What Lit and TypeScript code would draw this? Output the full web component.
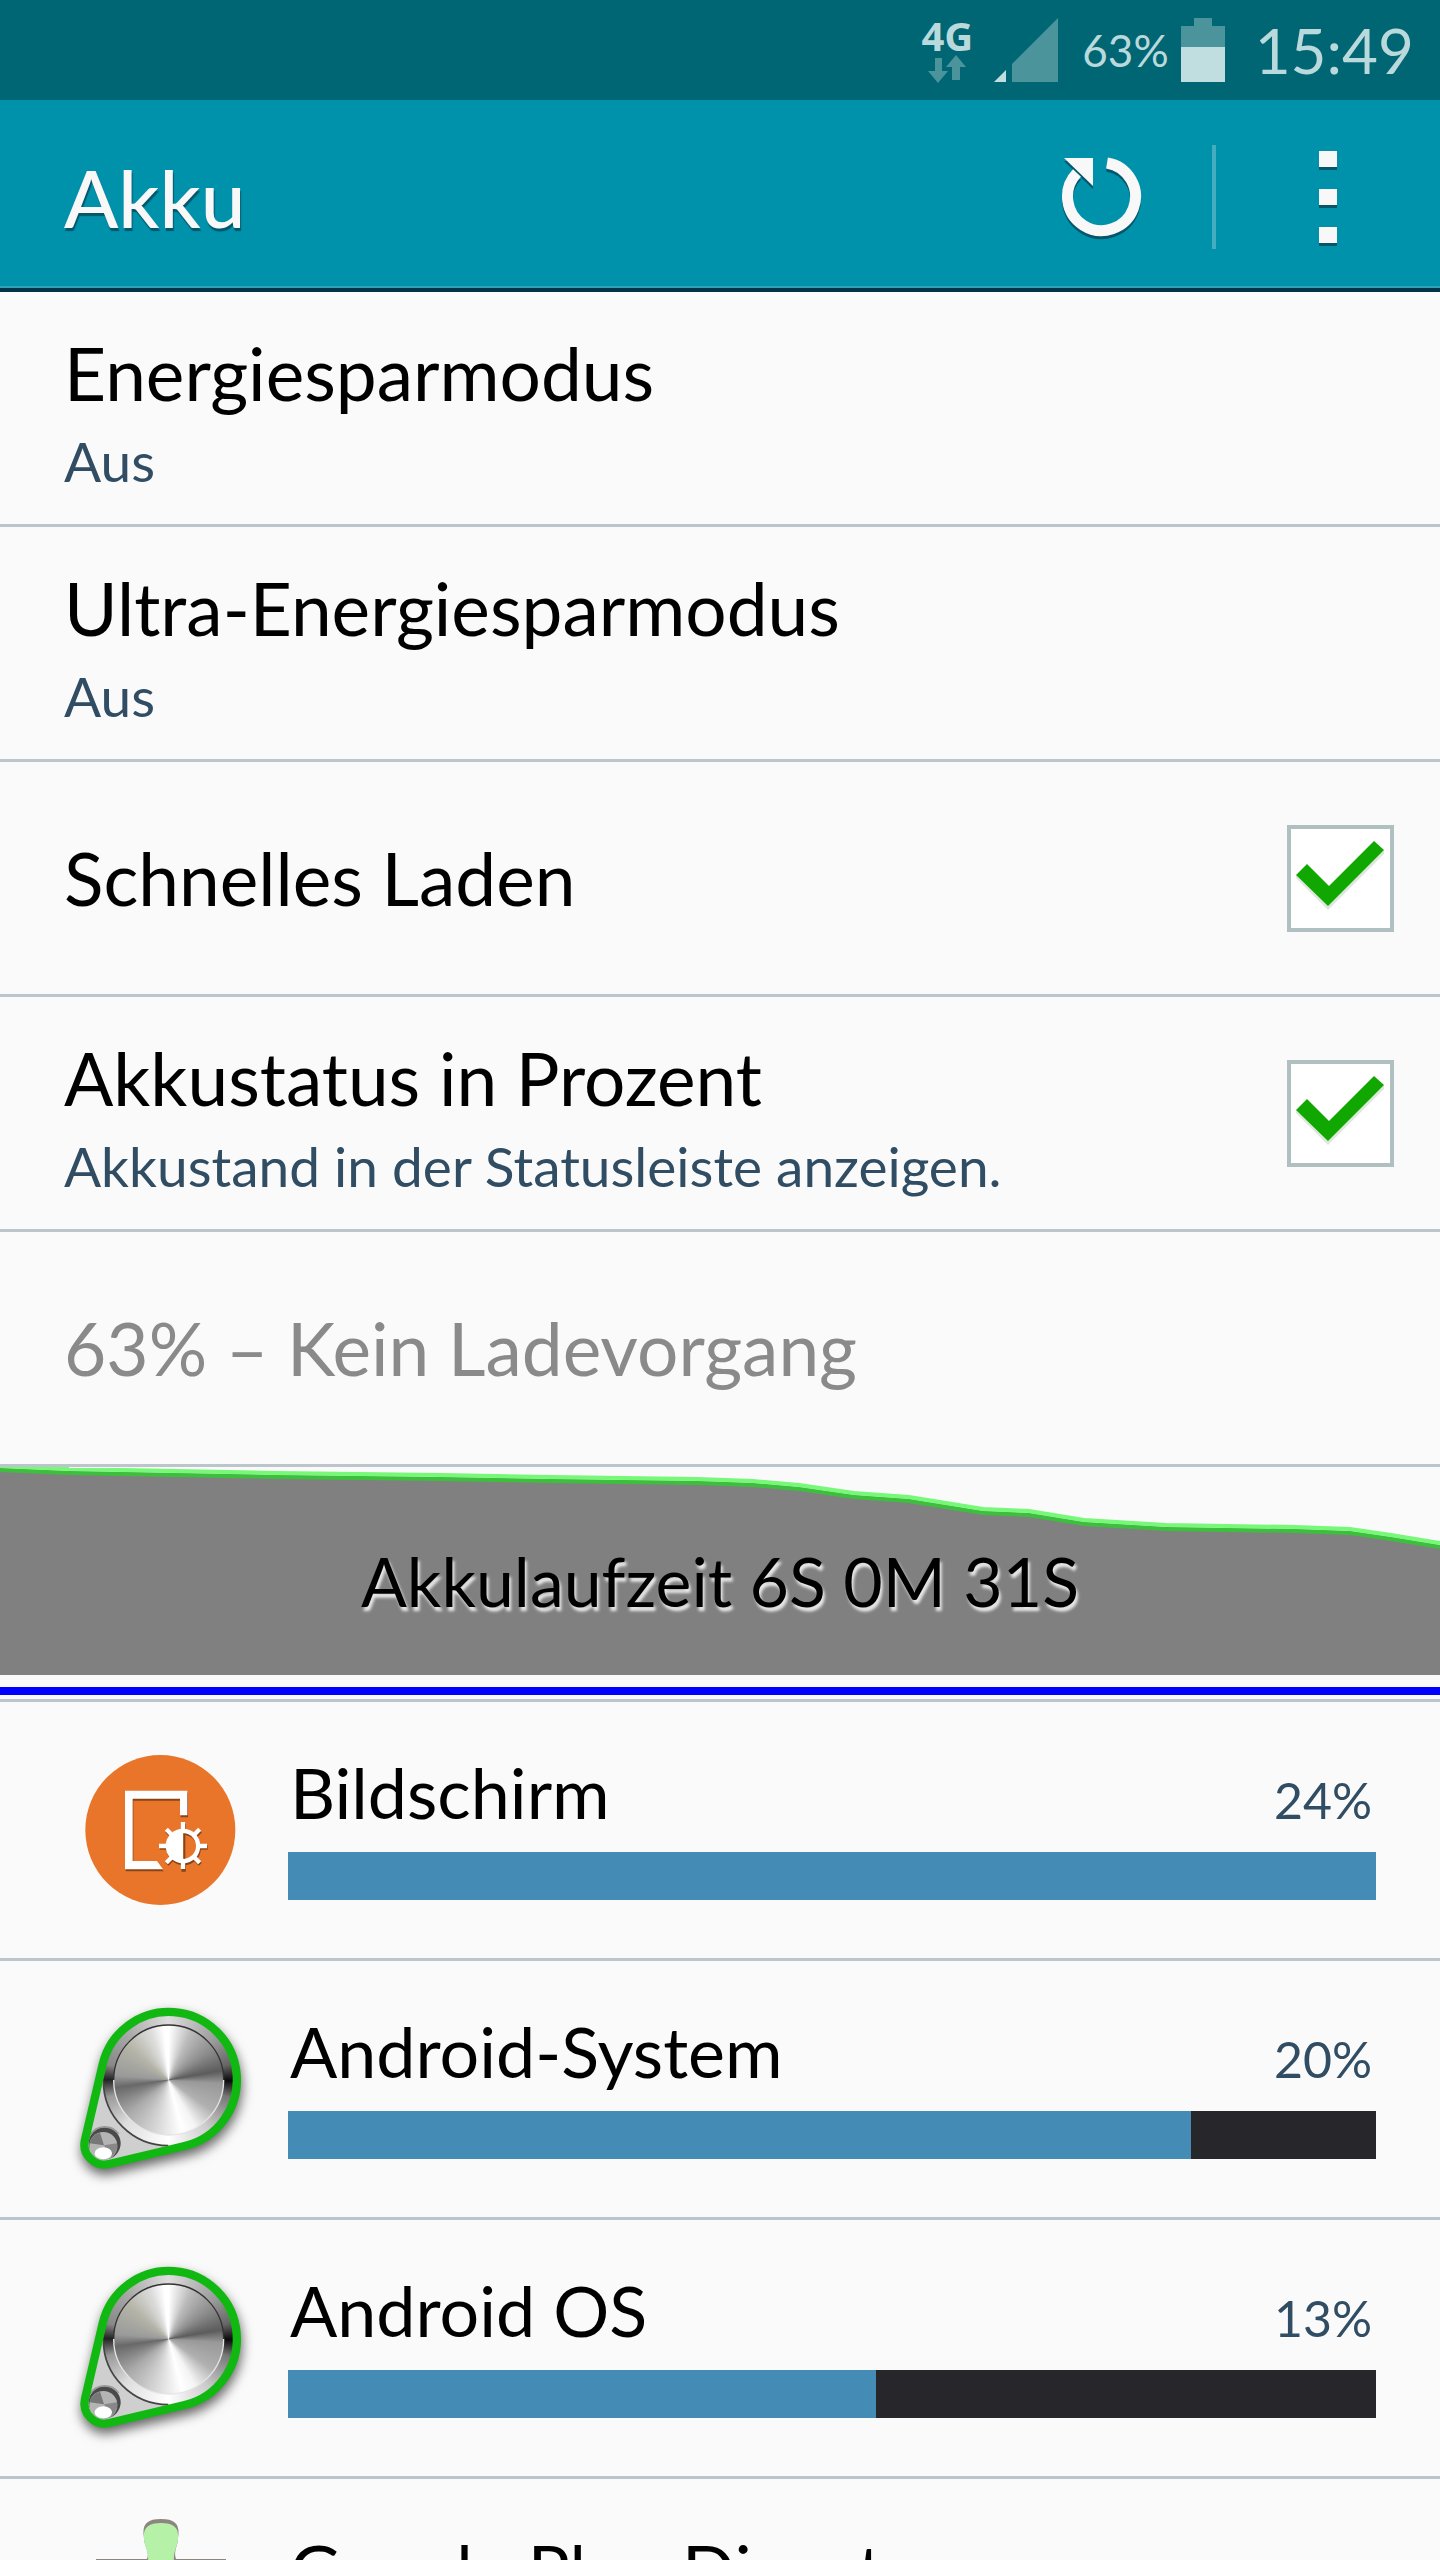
import { LitElement, html, css, svg, nothing } from "lit";
import { customElement, property } from "lit/decorators.js";

const screenIcon = svg`
  <svg class="icon" viewBox="36 66 528 528" aria-hidden="true">
    <circle cx="301" cy="330" r="225" fill="#e87529" />
    <g fill="#8a4316" transform="translate(2 6)">
      <path d="M195 212H382V286H360V236H218V423H291L309 448H195Z" />
      <circle cx="369" cy="378" r="52" />
    </g>
    <path d="M195 212H382V286H360V236H218V423H291L309 448H195Z" fill="#fff" />
    <g stroke="#8a4316" stroke-width="13" transform="translate(2 5)">
      <path d="M369 306V450M297 378H441M319 328L419 428M419 328L319 428" />
    </g>
    <g stroke="#fff" stroke-width="13">
      <path d="M369 306V330M369 426V447M297 378H322M416 378H441M319 328L336 345M419 328L402 345M319 428L336 411M419 428L402 411" />
    </g>
    <circle cx="369" cy="378" r="52" fill="#fff" />
    <path d="M370 340A38 38 0 0 1 370 416Z" fill="#e87529" />
    <path d="M370 340A38 38 0 0 1 407 372A40 36 0 0 0 376 345V416H370Z" fill="#8a4316" />
  </svg>
`;

const knobIcon = svg`
  <svg class="icon knob" viewBox="36 63 528 528" aria-hidden="true">
    <path d="M128 253A204 204 0 1 1 374 498L147 552A60 60 0 0 1 75 480Z" fill="#cfcfcf" />
    <foreignObject x="129" y="106" width="392" height="392"><div class="disc bezel"></div></foreignObject>
    <path d="M130 302A195 195 0 0 0 325 497" fill="none" stroke="#444" stroke-width="5" />
    <foreignObject x="161" y="135" width="330" height="330"><div class="disc face"></div></foreignObject>
    <path d="M161 300A165 165 0 0 1 491 300" fill="none" stroke="#333" stroke-width="4" />
    <path d="M161 300A165 165 0 0 0 491 300" fill="none" stroke="#e4e4e4" stroke-width="4" />
    <circle cx="134" cy="490" r="48" fill="#4a4a4a" />
    <path d="M90 465A52 52 0 0 1 176 462" fill="none" stroke="#999" stroke-width="5" />
    <circle cx="130" cy="498" r="42" fill="#b4b4b4" />
    <path d="M89 490A42 42 0 0 1 120 458L132 496Z" fill="#777" />
    <path d="M171 490L132 496L152 532A42 42 0 0 0 171 490Z" fill="#888" />
    <ellipse cx="130" cy="520" rx="26" ry="18" fill="#fff" />
    <path d="M128 253A204 204 0 1 1 374 498L147 552A60 60 0 0 1 75 480Z" fill="none" stroke="#12b812" stroke-width="25" />
  </svg>
`;

const puzzleIcon = svg`
  <svg class="icon" viewBox="0 0 176 176" aria-hidden="true">
    <path d="M72 19C70 7 73 0 89 0S108 7 106 19C106 27 101 32 104 40H154V136H24V40H75C78 32 72 27 72 19Z" fill="#8d857f" />
    <path d="M72 19C71 9 76 4 89 4S107 9 106 19C106 27 101 32 102 43H150V132H28V43H76C77 32 72 27 72 19Z" fill="#b5f2a8" />
  </svg>
`;

const icons = { screen: screenIcon, knob: knobIcon, puzzle: puzzleIcon };

@customElement("status-bar")
class StatusBar extends LitElement {
  static styles = css`
    :host {
      display: flex;
      align-items: center;
      justify-content: flex-end;
      height: 100px;
      padding: 0 26px;
      background: #006673;
      color: #b9d9dc;
    }
    .network {
      display: flex;
      flex-direction: column;
      align-items: center;
      width: 54px;
      margin-right: 20px;
      font: bold 40px/38px "Open Sans", sans-serif;
    }
    .network svg { display: block; }
    .signal { margin-right: 24px; }
    .level { font-size: 44px; margin-right: 12px; }
    .battery { margin-right: 30px; }
    .clock { font-size: 62px; }
  `;

  render() {
    return html`
      <span class="network">4G
        <svg width="38" height="28" viewBox="0 0 38 28" fill="#4b949c" aria-hidden="true">
          <path d="M7 3H14V16H20L10 28L0 16H7ZM28 0L38 12H32V25H24V12H18Z" />
        </svg>
      </span>
      <svg class="signal" width="64" height="64" viewBox="0 0 64 64" aria-hidden="true">
        <path d="M0 64L12 52V64Z" fill="#c0dde0" />
        <path d="M18 46L64 0V64H18Z" fill="#4b949c" />
      </svg>
      <span class="level">63%</span>
      <svg class="battery" width="44" height="64" viewBox="0 0 44 64" aria-hidden="true">
        <path d="M13 0H31V8H44V29H0V8H13Z" fill="#4b949c" />
        <path d="M0 29H44V64H0Z" fill="#c0dde0" />
      </svg>
      <span class="clock">15:49</span>
    `;
  }
}

@customElement("action-bar")
class ActionBar extends LitElement {
  static styles = css`
    :host {
      display: flex;
      align-items: center;
      height: 182px;
      padding: 6px 64px 0;
      background: #0091ab;
      border-bottom: 4px solid #00334a;
      box-shadow: inset 0 -2px #2ea3b8;
      color: #f8f8f8;
    }
    h1 {
      flex: 1;
      margin: 0;
      font-size: 80px;
      font-weight: 500;
      line-height: 96px;
      text-shadow: 1px 3px 1px #04566a;
    }
    button {
      display: flex;
      align-items: center;
      justify-content: center;
      padding: 0;
      border: 0;
      background: none;
    }
    .refresh { width: 96px; height: 104px; margin-right: 64px; }
    .separator { width: 4px; height: 104px; background: #45adbf; }
    .menu { width: 96px; height: 104px; margin-left: 64px; }
    svg { filter: drop-shadow(0 3px 0 #04566a); }
  `;

  render() {
    return html`
      <h1>Akku</h1>
      <button class="refresh" aria-label="Aktualisieren">
        <svg width="84" height="80" viewBox="0 0 84 80" aria-hidden="true">
          <path d="M49 6A34 34 0 1 1 19 16" fill="none" stroke="#f8f8f8" stroke-width="11" />
          <path d="M6 1H35V29Z" fill="#f8f8f8" />
        </svg>
      </button>
      <span class="separator"></span>
      <button class="menu" aria-label="Weitere Optionen">
        <svg width="18" height="92" viewBox="0 0 18 92" fill="#f8f8f8" aria-hidden="true">
          <path d="M0 0H18V16H0ZM0 38H18V54H0ZM0 76H18V92H0Z" />
        </svg>
      </button>
    `;
  }
}

@customElement("setting-row")
class SettingRow extends LitElement {
  @property() label = "";
  @property() note = "";
  @property({ type: Boolean }) toggle = false;
  @property({ type: Boolean }) muted = false;

  static styles = css`
    :host {
      display: block;
      border-bottom: 3px solid #bcc5cb;
    }
    .row {
      display: flex;
      align-items: center;
      min-height: 232px;
      padding: 0 46px 0 64px;
      box-sizing: border-box;
    }
    .text { flex: 1; display: flex; flex-direction: column; }
    .double { padding-top: 14px; }
    .title { font-size: 73px; line-height: 92px; color: #000; }
    .muted { color: #8a8a8a; }
    .note { font-size: 55px; line-height: 84px; color: #304d63; }
    .box { display: grid; }
    .box > * { grid-area: 1 / 1; }
    input {
      appearance: none;
      width: 107px;
      height: 107px;
      margin: 0;
      border: 4px solid #b0bfc0;
      background: #fff;
    }
    svg { pointer-events: none; visibility: hidden; }
    input:checked + svg { visibility: visible; }
  `;

  render() {
    const text = html`
      <span class="text ${this.note ? "double" : ""}">
        <span class="title ${this.muted ? "muted" : ""}">${this.label}</span>
        ${this.note ? html`<span class="note">${this.note}</span>` : nothing}
      </span>
    `;
    return this.toggle
      ? html`<label class="row">
          ${text}
          <span class="box">
            <input type="checkbox" checked />
            <svg width="107" height="107" viewBox="0 0 107 107" aria-hidden="true">
              <path d="M9 53L41 85L97 29V25L41 78L9 50Z" fill="#dde8dd" />
              <path d="M9 50L20 39L42 61L87 16L97 25L41 81Z" fill="#10a800" />
            </svg>
          </span>
        </label>`
      : html`<div class="row">${text}</div>`;
  }
}

@customElement("battery-chart")
class BatteryChart extends LitElement {
  static styles = css`
    :host {
      display: block;
      border-bottom: 3px solid #bcc5cb;
      padding-bottom: 4px;
    }
    .chart { display: grid; margin-bottom: 12px; }
    .chart > * { grid-area: 1 / 1; }
    svg { display: block; width: 100%; height: 208px; }
    .caption {
      align-self: center;
      padding-top: 20px;
      text-align: center;
      font-size: 68px;
      line-height: 88px;
      color: #000;
      text-shadow: 2px 4px 3px #e8e8e8;
    }
    .timeline { height: 8px; background: #0000ff; }
  `;

  render() {
    const curve =
      "0 1L69 4L276 8L441 10L551 12L698 14L753 16L799 20L854 28L909 32L983 44L1029 46L1084 55L1166 60L1295 62L1350 64L1391 70L1440 78";
    return html`
      <div class="chart">
        <svg viewBox="0 0 1440 208" preserveAspectRatio="none" aria-hidden="true">
          <path d="M${curve}V208H0Z" fill="#808080" />
          <path d="M${curve}" fill="none" stroke="#3dbf3d" stroke-width="4" transform="translate(0 2)" />
          <path d="M${curve}" fill="none" stroke="#78f878" stroke-width="4" transform="translate(0 -2)" />
        </svg>
        <span class="caption">Akkulaufzeit 6S 0M 31S</span>
      </div>
      <div class="timeline"></div>
    `;
  }
}

@customElement("usage-row")
class UsageRow extends LitElement {
  @property() name = "";
  @property() icon: keyof typeof icons = "knob";
  @property({ type: Number }) percent = 0;
  @property({ type: Number }) share = 0;

  static styles = css`
    :host {
      display: flex;
      align-items: center;
      gap: 40px;
      height: 256px;
      padding: 0 64px 0 72px;
      border-bottom: 3px solid #bcc5cb;
    }
    .icon { display: block; width: 176px; height: 176px; flex: none; }
    .knob { filter: drop-shadow(1px 6px 6px rgba(0, 0, 0, 0.6)); }
    .disc { width: 100%; height: 100%; border-radius: 50%; }
    .bezel {
      background: conic-gradient(#ddd 0deg, #999 50deg, #666 75deg, #0a0a0a 90deg, #777 105deg, #ccc 140deg, #fff 180deg, #ddd 225deg, #999 255deg, #222 271deg, #888 285deg, #aaa 320deg, #ddd 360deg);
    }
    .face {
      background: conic-gradient(#fff 0deg, #bbb 25deg, #8c8c8c 55deg, #5c5c5c 80deg, #999 94deg, #b0b0b0 125deg, #f4f4f4 150deg, #fff 165deg, #ddd 190deg, #aaa 230deg, #686868 262deg, #9a9a9a 275deg, #b4b4a8 310deg, #ddd 340deg, #fff 355deg);
    }
    .body { flex: 1; align-self: flex-start; padding-top: 46px; }
    .heading {
      display: flex;
      justify-content: space-between;
      align-items: baseline;
      padding: 0 4px 0 2px;
      margin-bottom: 16px;
    }
    .name { font-size: 70px; line-height: 88px; color: #000; }
    .percent { font-size: 50px; line-height: 72px; color: #304d63; }
    .bar { height: 48px; background: #27262b; }
    .fill { height: 100%; background: #448bb5; }
  `;

  render() {
    return html`
      ${icons[this.icon]}
      <div class="body">
        <div class="heading">
          <span class="name">${this.name}</span>
          <span class="percent">${this.percent}%</span>
        </div>
        <div class="bar"><div class="fill" style="width:${this.share}%"></div></div>
      </div>
    `;
  }
}

@customElement("app-root")
class AppRoot extends LitElement {
  static styles = css`
    :host {
      display: block;
      height: 100vh;
      overflow: hidden;
      background: #fafafa;
      font-family: "Choco Cooky", Lato, "Open Sans", sans-serif;
    }
  `;

  render() {
    return html`
      <status-bar></status-bar>
      <action-bar></action-bar>
      <main>
        <setting-row label="Energiesparmodus" note="Aus"></setting-row>
        <setting-row label="Ultra-Energiesparmodus" note="Aus"></setting-row>
        <setting-row label="Schnelles Laden" toggle></setting-row>
        <setting-row label="Akkustatus in Prozent" note="Akkustand in der Statusleiste anzeigen." toggle></setting-row>
        <setting-row label="63% – Kein Ladevorgang" muted></setting-row>
        <battery-chart></battery-chart>
        <usage-row icon="screen" name="Bildschirm" percent="24" share="100"></usage-row>
        <usage-row icon="knob" name="Android-System" percent="20" share="83"></usage-row>
        <usage-row icon="knob" name="Android OS" percent="13" share="54"></usage-row>
        <usage-row icon="puzzle" name="Google Play-Dienste" percent="12" share="50"></usage-row>
      </main>
    `;
  }
}
